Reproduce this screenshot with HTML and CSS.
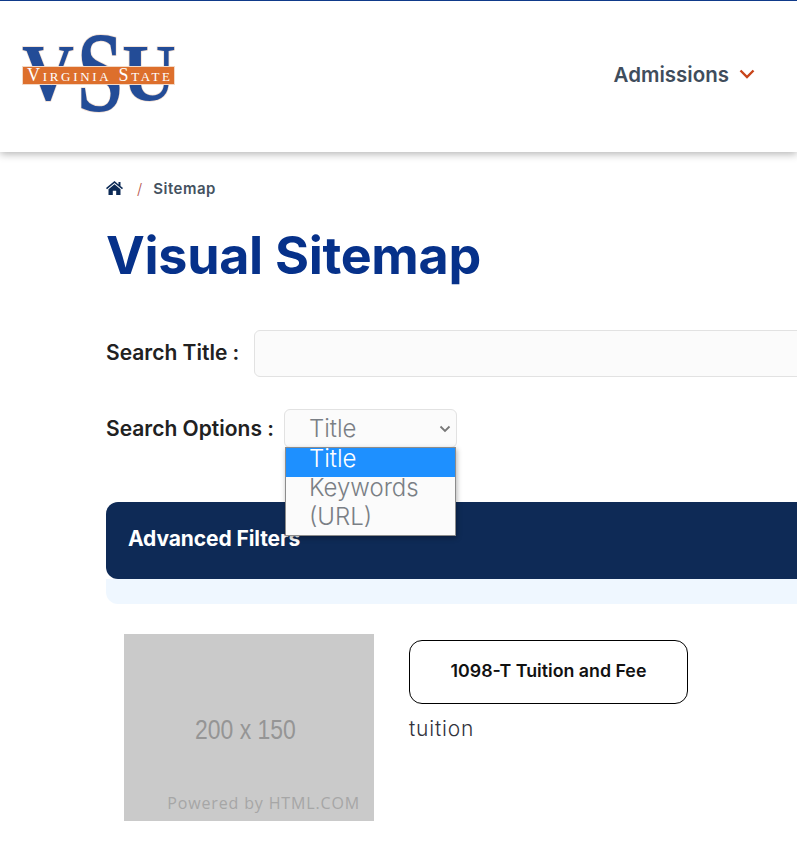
FILE: index.html
```html
<!DOCTYPE html>
<html lang="en">
<head>
    <meta charset="UTF-8">
    <meta name="viewport" content="width=device-width, initial-scale=1.0">
    <title>Visual Sitemap</title>
    <link rel="stylesheet" href="styles.css">
</head>
<body>
    <header class="site-header">
        <a class="logo" href="#">
            <svg class="logo-mark" width="156" height="84" viewBox="0 0 156 84">
                <text class="logo-letters" x="1" y="69" font-size="80" textLength="52" lengthAdjust="spacingAndGlyphs">V</text>
                <text class="logo-letters" x="101" y="69" font-size="80" textLength="54" lengthAdjust="spacingAndGlyphs">U</text>
                <text class="logo-letters" x="56" y="80" font-size="114" textLength="46" lengthAdjust="spacingAndGlyphs">S</text>
                <rect x="1.500" y="35.500" width="152" height="18" fill="#dd6f2c" stroke="#f3d9c6"/>
                <text class="logo-name" x="6" y="50" textLength="143">Virginia State</text>
            </svg>
        </a>
        <nav class="main-nav">
            <a href="#">Admissions</a>
            <svg class="nav-chevron" width="16" height="10" viewBox="0 0 16 10">
                <path d="M1.500 1.500 8 8l6.500-6.500" fill="none" stroke="#c8441a" stroke-width="2.400"/>
            </svg>
        </nav>
    </header>

    <main class="content">
        <div class="breadcrumb">
            <svg class="home-icon" width="17" height="14" viewBox="0 0 17 14">
                <path d="M8.500 0 0 7l1 1.200L8.500 2l7.500 6.200L17 7l-2.500-2V1h-2v2.400z" fill="#0c2a56"/>
                <path d="M8.500 3.300 2.500 8.300V14h4.300V9.800h3.400V14h4.300V8.300z" fill="#0c2a56"/>
            </svg>
            <span class="crumb-sep">/</span>
            <span class="crumb-current">Sitemap</span>
        </div>

        <h1>Visual Sitemap</h1>

        <div class="search-row title-row">
            <label class="search-label">Search Title :</label>
            <input class="title-input" type="text">
        </div>

        <div class="search-row options-row">
            <label class="search-label">Search Options :</label>
            <div class="select-wrap">
                <div class="select-box">
                    <span>Title</span>
                    <svg width="12" height="8" viewBox="0 0 12 8">
                        <path d="M1.500 1.500 6 6l4.500-4.500" fill="none" stroke="#777" stroke-width="1.800"/>
                    </svg>
                </div>
                <ul class="select-menu">
                    <li class="selected">Title</li>
                    <li class="option">Keywords (URL)</li>
                </ul>
            </div>
        </div>

        <div class="filters">
            <div class="filters-head">Advanced Filters</div>
            <div class="filters-body"></div>
        </div>

        <div class="result">
            <div class="placeholder">
                <span class="placeholder-size">200 x 150</span>
                <span class="placeholder-credit">Powered by HTML.COM</span>
            </div>
            <div class="result-info">
                <a class="result-title" href="#">1098-T Tuition and Fee</a>
                <p class="result-tag">tuition</p>
            </div>
        </div>
    </main>
</body>
</html>
```

FILE: styles.css
```css
* {
    margin: 0;
    padding: 0;
    box-sizing: border-box;
}

html, body {
    overflow: hidden;
    height: 843px;
}

body {
    font-family: 'Inter', 'Liberation Sans', sans-serif;
    background-color: #fff;
    color: #212121;
}

a {
    text-decoration: none;
}

.site-header {
    height: 152px;
    border-top: 1px solid #0f3a8a;
    padding: 30px 42px 0 21px;
    display: flex;
    justify-content: space-between;
    background-color: #fff;
    box-shadow: 0 2px 8px rgba(0, 0, 0, 0.3);
}

.logo {
    display: block;
    height: 84px;
}

.logo-mark {
    overflow: visible;
}

.logo-letters {
    font-family: 'Liberation Serif', serif;
    font-weight: 700;
    fill: #234c97;
    stroke: #f0dccf;
    stroke-width: 1.500px;
    paint-order: stroke;
}

.logo-name {
    font-family: 'Liberation Serif', serif;
    font-size: 18px;
    font-variant: small-caps;
    fill: #fff;
}

.main-nav {
    display: flex;
    align-items: center;
    gap: 10px;
    height: 86px;
}

.main-nav a {
    font-size: 20.500px;
    font-weight: 600;
    color: #3f4d5c;
}

.content {
    padding: 26px 0 0 106px;
    width: 1400px;
}

.breadcrumb {
    display: flex;
    align-items: center;
    height: 20px;
    font-size: 15px;
}

.crumb-sep {
    margin: 0 11px 0 14px;
    color: #b5544a;
    font-weight: 300;
}

.crumb-current {
    font-weight: 600;
    letter-spacing: 0.500px;
    color: #45525f;
}

h1 {
    margin-top: 28px;
    font-size: 52px;
    line-height: 60px;
    font-weight: 700;
    letter-spacing: -0.300px;
    color: #06318a;
}

.search-row {
    display: flex;
    align-items: center;
}

.title-row {
    margin-top: 44px;
    gap: 15px;
}

.title-row .search-label {
    padding-bottom: 2px;
}

.options-row {
    margin-top: 32px;
    gap: 10px;
}

.search-label {
    font-size: 21px;
    font-weight: 600;
    color: #212121;
}

.title-input {
    width: 800px;
    height: 47px;
    background-color: #fbfbfb;
    border: 1px solid #e2e2e2;
    border-radius: 6px;
}

.select-wrap {
    position: relative;
}

.select-box {
    width: 173px;
    height: 39px;
    padding: 0 5px 0 24px;
    display: flex;
    align-items: center;
    justify-content: space-between;
    font-size: 24px;
    font-weight: 300;
    color: #7a7f85;
    background-color: #fbfbfb;
    border: 1px solid #e2e2e2;
    border-radius: 6px;
}

.select-menu {
    position: absolute;
    top: 38px;
    left: 1px;
    width: 171px;
    padding-bottom: 4px;
    list-style: none;
    font-size: 24px;
    font-weight: 300;
    line-height: 28.500px;
    color: #7a7f85;
    background-color: #fbfbfb;
    border: 1px solid #8c8c8c;
    box-shadow: 1px 2px 5px rgba(0, 0, 0, 0.3);
}

.select-menu li {
    padding-left: 23px;
}

.select-menu .selected {
    height: 29px;
    line-height: 21px;
    color: #fff;
    background-color: #1e90ff;
}

.select-menu .option {
    margin-top: -3px;
}

.filters {
    margin-top: 54px;
}

.filters-head {
    height: 77px;
    padding: 0 22px 5px;
    display: flex;
    align-items: center;
    font-size: 21px;
    font-weight: 700;
    letter-spacing: -0.100px;
    color: #fff;
    background-color: #0e2a56;
    border-radius: 12px;
}

.filters-body {
    height: 25px;
    background-color: #eff7ff;
    border-radius: 0 0 12px 12px;
}

.result {
    margin: 30px 0 0 18px;
    display: flex;
    gap: 35px;
}

.placeholder {
    width: 250px;
    height: 187px;
    position: relative;
    background-color: #cacaca;
}

.placeholder-size {
    position: absolute;
    top: 81px;
    left: 71px;
    font-family: 'Liberation Sans', sans-serif;
    font-size: 27px;
    color: #959595;
    transform: scaleX(0.850);
    transform-origin: left;
}

.placeholder-credit {
    position: absolute;
    right: 14px;
    bottom: 7px;
    font-family: 'Open Sans', sans-serif;
    font-size: 16px;
    letter-spacing: 0.850px;
    color: #a6a6a6;
}

.result-info {
    padding-top: 6px;
}

.result-title {
    display: flex;
    align-items: center;
    justify-content: center;
    width: 279px;
    height: 64px;
    padding-bottom: 3px;
    font-size: 17.800px;
    font-weight: 600;
    color: #111;
    border: 1px solid #000;
    border-radius: 13px;
}

.result-tag {
    margin-top: 12px;
    font-size: 21px;
    font-weight: 300;
    letter-spacing: 0.800px;
    color: #33333d;
}
```
